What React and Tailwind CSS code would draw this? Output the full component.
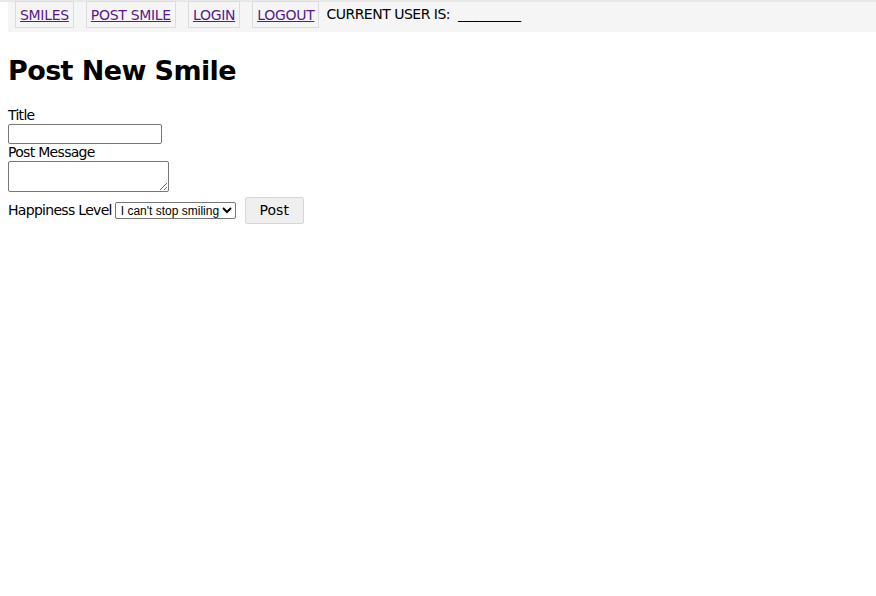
import React, { useState } from "react";

const font = { fontFamily: '"DejaVu Sans", Verdana, sans-serif' };

export default function App() {
  const [title, setTitle] = useState("");
  const [message, setMessage] = useState("");
  const [level, setLevel] = useState("smiling");

  const links = ["SMILES", "POST SMILE", "LOGIN", "LOGOUT"];

  return (
    <div className="min-h-[596px] bg-white text-black" style={font}>
      <div className="h-[2px] bg-[#e8e8e8]" />
      <nav className="ml-2 flex items-start h-[30px] bg-[#f5f5f5] pl-[7px] text-[14px]">
        {links.map((l) => (
          <a
            key={l}
            href="#"
            className="mr-3 -mt-px h-[27px] px-[4px] pt-[4px] border border-[#dcdcdc] text-[#551a8b] underline leading-[18px] tracking-[-0.3px]"
          >
            {l}
          </a>
        ))}
        <span className="-ml-[5px] pt-[3px] leading-[18px] tracking-[-0.5px]">
          CURRENT USER IS:&nbsp;&nbsp;<span className="tracking-normal">_________</span>
        </span>
      </nav>

      <div className="px-2">
        <h1 className="mt-[21px] mb-[18px] text-[27px] font-bold leading-[36px] tracking-[-0.6px]">
          Post New Smile
        </h1>

        <form className="text-[14px] leading-[17px] tracking-[-0.7px]">
          <label className="block">Title</label>
          <input
            type="text"
            value={title}
            onChange={(e) => setTitle(e.target.value)}
            className="block w-[154px] h-[20px] border border-[#767676] rounded-[2px] px-1 text-[13px]"
          />
          <label className="block">Post Message</label>
          <textarea
            value={message}
            onChange={(e) => setMessage(e.target.value)}
            className="block w-[161px] h-[31px] border border-[#767676] rounded-[2px] resize align-top"
          />
          <div className="flex items-center mt-[5px]">
            <span>Happiness Level</span>
            <select
              value={level}
              onChange={(e) => setLevel(e.target.value)}
              className="ml-[3px] h-[17px] w-[121px] border border-[#767676] rounded-[2px] text-[12px] leading-[14px] tracking-normal pl-[1px]"
              style={{ fontFamily: '"Liberation Sans", Arial, sans-serif' }}
            >
              <option value="smiling">I can't stop smiling</option>
              <option value="happy">Happy</option>
              <option value="ok">Okay</option>
            </select>
            <button
              type="button"
              className="ml-[9px] w-[59px] h-[27px] bg-[#efefef] border border-[#d6d6d6] rounded-[2px] text-[14px] tracking-normal"
            >
              Post
            </button>
          </div>
        </form>
      </div>
    </div>
  );
}
